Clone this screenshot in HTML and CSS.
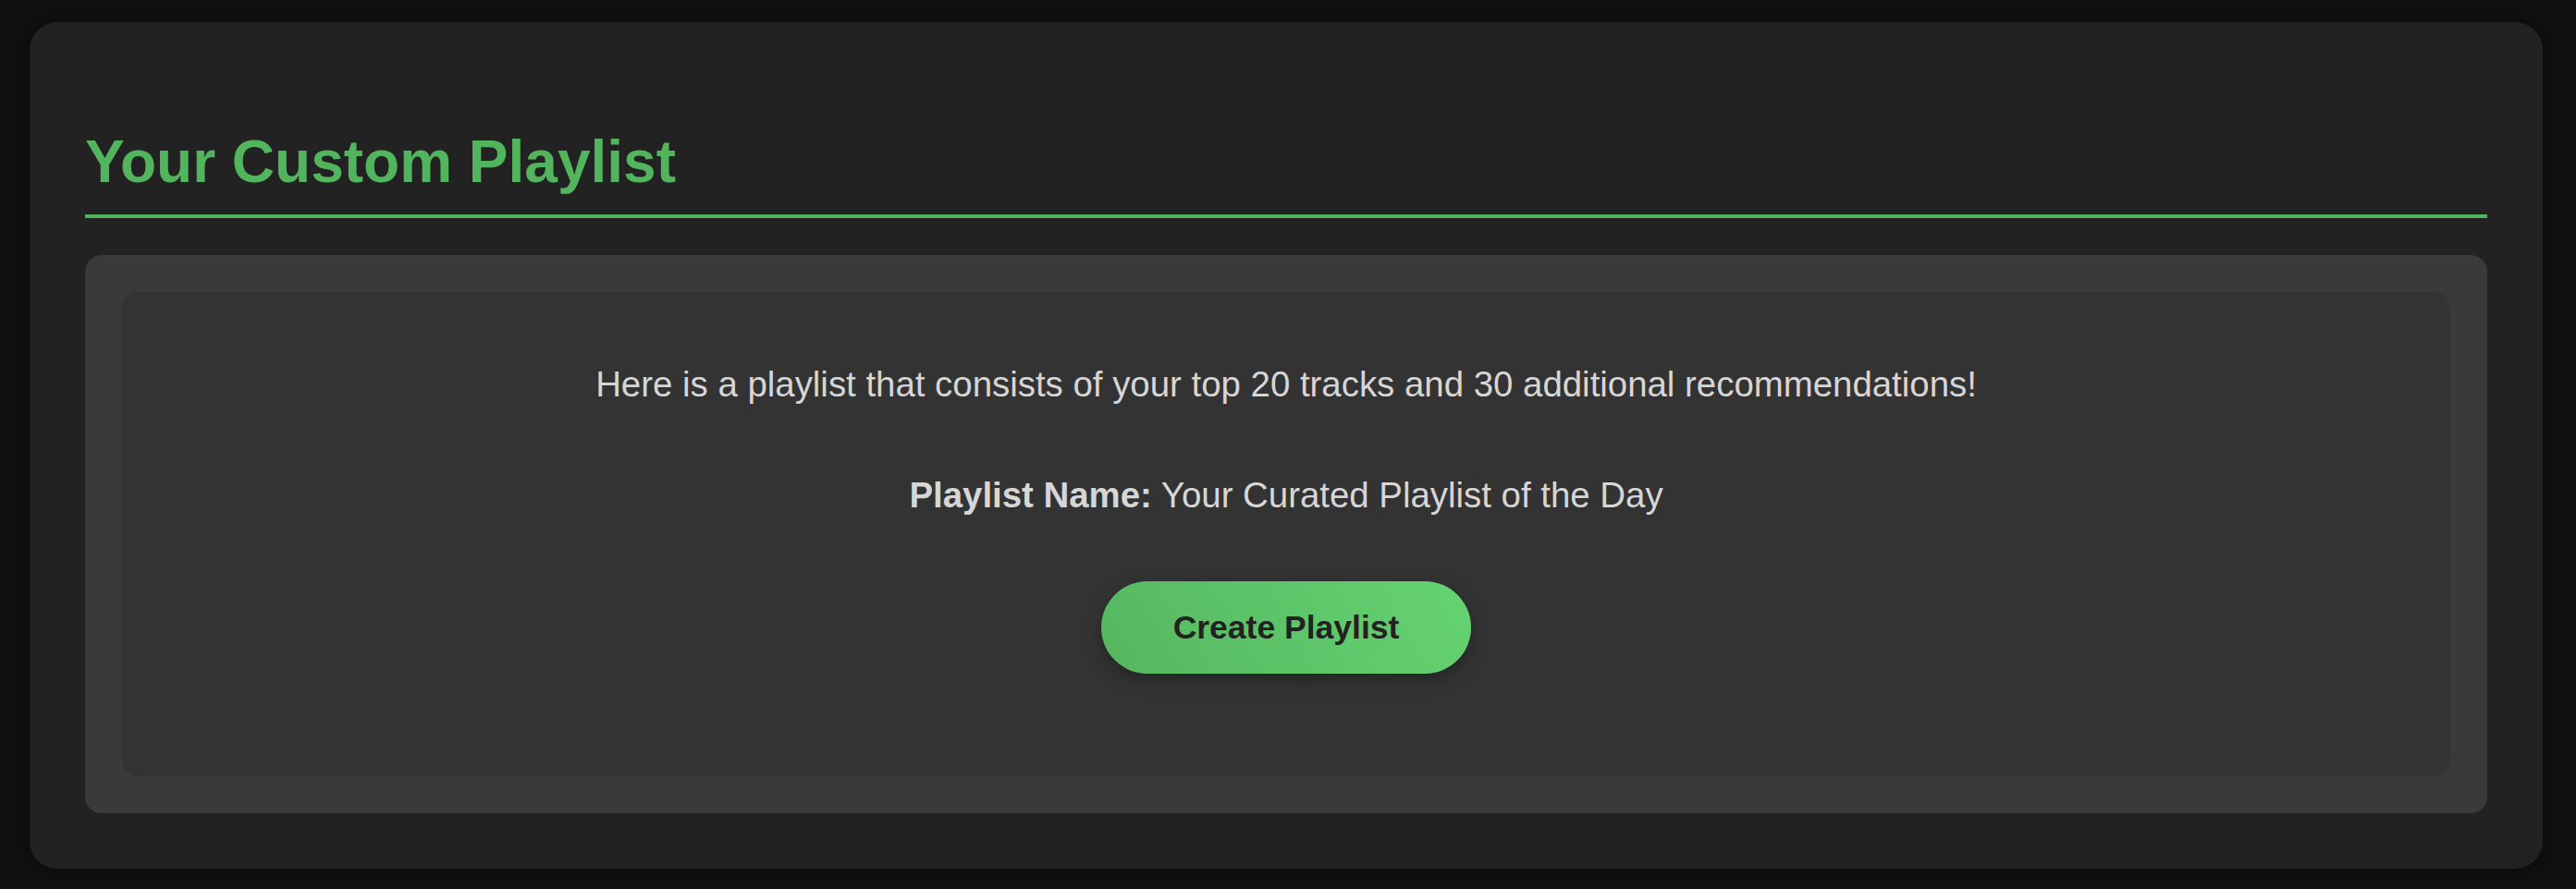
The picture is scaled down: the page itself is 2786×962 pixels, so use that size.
FILE: index.html
```html
<!DOCTYPE html>
<html lang="en">
<head>
<meta charset="utf-8">
<title>Your Custom Playlist</title>
<link rel="stylesheet" href="styles.css">
</head>
<body>
  <main class="container">
    <h2 class="title">Your Custom Playlist</h2>
    <section class="card">
      <div class="card-inner">
        <p class="text">Here is a playlist that consists of your top 20 tracks and 30 additional recommendations!</p>
        <p class="text"><strong>Playlist Name:</strong> Your Curated Playlist of the Day</p>
        <button class="btn" type="button">Create Playlist</button>
      </div>
    </section>
  </main>
</body>
</html>
```

FILE: styles.css
```css
html, body {
  margin: 0;
  padding: 0;
}

body {
  background: #111111;
  font-family: "Liberation Sans", Arial, Helvetica, sans-serif;
  color: #d6d6d6;
  padding: 24px 36px 22px 32px;
  box-sizing: border-box;
  height: 962px;
}

.container {
  background: #222222;
  border-radius: 30px;
  box-shadow: 0 0 24px rgba(0, 0, 0, 0.45);
  padding: 115px 60px 60px;
  height: 916px;
  box-sizing: border-box;
}

.title {
  margin: 0 0 40px;
  font-size: 64px;
  font-weight: 700;
  line-height: 73px;
  color: #52b45d;
  padding-bottom: 20px;
  border-bottom: 4px solid #52b45d;
}

.card {
  background: #3a3a3a;
  border-radius: 18px;
  padding: 40px;
}

.card-inner {
  background: #333333;
  border-radius: 18px;
  padding: 40px 40px 110px;
  display: flex;
  flex-direction: column;
  align-items: center;
  height: 524px;
  box-sizing: border-box;
}

.text {
  margin: 38px 0;
  font-size: 38.4px;
  line-height: 44px;
  text-align: center;
}

.text strong {
  font-weight: 700;
}

.btn {
  margin-top: 33px;
  flex-shrink: 0;
  width: 400px;
  height: 100px;
  border: none;
  border-radius: 50px;
  background: linear-gradient(60deg, #55b760 0%, #65d371 100%);
  color: #222222;
  font-family: "Liberation Sans", Arial, Helvetica, sans-serif;
  font-size: 35.5px;
  font-weight: 700;
  box-shadow: 0 6px 18px rgba(0, 0, 0, 0.3);
  cursor: pointer;
}
```
